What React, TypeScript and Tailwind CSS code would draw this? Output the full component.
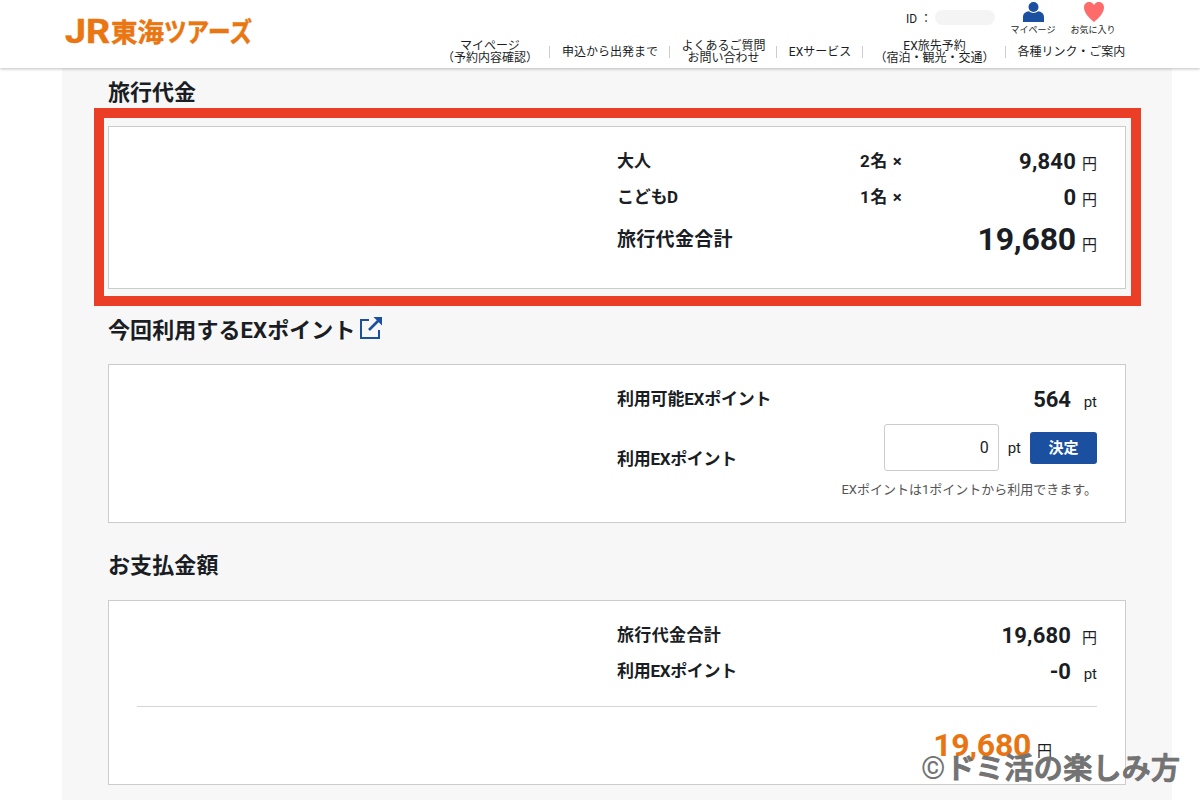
const navItems = [
  { lines: ['マイページ', '（予約内容確認）'], width: 'w-[120px]' },
  { lines: ['申込から出発まで'], width: 'w-[120px]' },
  { lines: ['よくあるご質問', 'お問い合わせ'], width: 'w-[107px]' },
  { lines: ['EXサービス'], width: 'w-[86px]' },
  { lines: ['EX旅先予約', '（宿泊・観光・交通）'], width: 'w-[143px]' },
  { lines: ['各種リンク・ご案内'], width: 'w-[131px]' },
]

function Logo() {
  return (
    <svg width="200" height="44" viewBox="0 0 200 44" className="fill-[#ea7611] stroke-[#ea7611] font-bold" strokeWidth="0.5">
      <text x="1" y="34" fontSize="33" textLength="45" lengthAdjust="spacingAndGlyphs">JR</text>
      <text x="47" y="32.500" fontSize="26" textLength="53" lengthAdjust="spacingAndGlyphs">東海</text>
      <text x="100" y="32.500" fontSize="27" textLength="88" lengthAdjust="spacingAndGlyphs">ツアーズ</text>
    </svg>
  )
}

function Header() {
  return (
    <header className="relative z-10 flex h-[68px] bg-white pl-16 shadow-[0_1px_3px_rgba(0,0,0,0.25)]">
      <div className="w-[366px] pt-[9px]">
        <Logo />
      </div>
      <div className="w-[707px]">
        <div className="flex h-[40px] justify-end pr-[14px]">
          <div className="flex h-[37px] items-center pr-[8px] text-xs">
            <span className="w-[29px] whitespace-nowrap">ID ：</span>
            <span className="mb-[2px] h-[15px] w-[60px] rounded-full bg-[#f4f4f4]" />
          </div>
          <a className="flex w-[60px] flex-col items-center pt-[2px]">
            <svg width="22" height="20" viewBox="0 0 22 20" className="fill-[#1b4f9f]">
              <circle cx="11.500" cy="5" r="5" />
              <path d="M1 20v-4.500C1 11.500 3.500 9.800 7 9.300C9.500 11.400 13.500 11.400 16 9.300C19.500 9.800 22 11.500 22 15.500V20z" />
            </svg>
            <span className="mt-[3px] text-[9px] leading-[10px]">マイページ</span>
          </a>
          <a className="flex w-[60px] flex-col items-center pt-[2px]">
            <svg width="21" height="20" viewBox="-1 0 21 20" className="fill-[#ff6b6b]">
              <path d="M10 3C8.500 0.500 6.500 0 5 0C2 0 0 2.400 0 5.600C0 11 5.500 16.500 10 20C14.500 16.500 20 11 20 5.600C20 2.400 18 0 15 0C13.500 0 11.500 0.500 10 3z" />
            </svg>
            <span className="mt-[3px] text-[9px] leading-[10px]">お気に入り</span>
          </a>
        </div>
        <nav className="flex h-6 items-center">
          {navItems.map((item, i) => (
            <div key={i} className={`relative flex flex-col items-center text-xs leading-3 whitespace-nowrap ${item.width}`}>
              {item.lines.map((line) => (
                <span key={line}>{line}</span>
              ))}
              {i < navItems.length - 1 && (
                <span className="absolute top-1/2 right-0 h-3 w-px -translate-y-1/2 bg-[#ccc]" />
              )}
            </div>
          ))}
        </nav>
      </div>
    </header>
  )
}

function Unit({ children, className = 'w-[26px]' }: { children: string; className?: string }) {
  return <span className={`inline-block text-right text-[15px] font-normal tracking-normal ${className}`}>{children}</span>
}

export default function App() {
  return (
    <div className="relative h-[800px] w-[1200px] overflow-hidden bg-white font-['Roboto','Noto_Sans_CJK_JP',sans-serif] text-[#1a1e24]">
      <Header />

      <main className="ml-[62px] h-[732px] w-[1110px] bg-[#f7f7f7] pr-[46px] pl-[46px]">
        <h2 className="pt-[9px] text-[22px] leading-8 font-bold">旅行代金</h2>

        <section className="relative mt-[17px] h-[163px] border border-[#ccc] bg-white pt-[16px] pr-7 pl-[508px] text-[17px] font-bold">
          <div className="flex h-9 items-center">
            <span className="w-[243px] pt-[2px]">大人</span>
            <span className="pt-[2px] tracking-[0.6px]">2名 ×</span>
            <span className="ml-auto text-[22px] tracking-[0.2px]">9,840<Unit className="w-[21px]">円</Unit></span>
          </div>
          <div className="flex h-9 items-center">
            <span className="w-[243px] pt-[2px] tracking-[-0.3px]">こどもD</span>
            <span className="pt-[2px] tracking-[0.6px]">1名 ×</span>
            <span className="ml-auto text-[22px]">0<Unit className="w-[21px]">円</Unit></span>
          </div>
          <div className="flex h-[46px] items-center">
            <span className="pt-[4px] text-[19px] tracking-[0.3px]">旅行代金合計</span>
            <span className="ml-auto pt-px text-[32px] tracking-[-0.2px]">19,680<Unit className="w-[21px]">円</Unit></span>
          </div>
          {/* Highlight frame */}
          <div className="absolute -top-[19px] -right-4 -bottom-[18px] -left-[15px] border-[10px] border-[#ea3f26]" />
        </section>

        <h2 className="mt-[25px] flex h-8 items-center pt-[2px] text-[22px] leading-8 font-bold">
          <span className="tracking-[0.1px]">今回利用するEXポイント</span>
          <svg width="24" height="24" viewBox="0 0 24 24" className="-mt-[6px] ml-[3px] fill-none stroke-[#1b4f9f]" strokeWidth="2">
            <path d="M10 4H2V22H20V14" />
            <path d="M10 14L19 5" strokeWidth="2.600" />
            <path d="M14.500 1H23V9.500z" className="fill-[#1b4f9f] stroke-none" />
          </svg>
        </h2>

        <section className="mt-[18px] h-[159px] border border-[#ccc] bg-white pt-[16px] pr-7 pl-[508px] text-[17px] font-bold">
          <div className="flex h-9 items-center">
            <span className="pt-[2px] tracking-[-0.2px]">利用可能EXポイント</span>
            <span className="ml-auto text-[22px]">564<Unit>pt</Unit></span>
          </div>
          <div className="flex h-[60px]">
            <span className="pt-[30px] tracking-[-0.3px]">利用EXポイント</span>
            <div className="mt-[7px] ml-auto flex h-[47px] items-center">
              <input
                defaultValue="0"
                className="h-[47px] w-[115px] rounded-[3px] border border-[#ccc] pr-[9px] text-right text-base font-normal"
              />
              <span className="ml-[9px] pt-px text-[15px] font-normal">pt</span>
              <button className="ml-[9px] h-8 w-[67px] rounded-[3px] bg-[#1b4f9f] pt-px text-[15px] font-bold text-white">決定</button>
            </div>
          </div>
          <p className="mt-[3px] text-right text-[13px] leading-5 font-normal text-[#555]">EXポイントは1ポイントから利用できます。</p>
        </section>

        <h2 className="mt-[27px] text-[22px] leading-8 font-bold tracking-[0.1px]">お支払金額</h2>

        <section className="mt-[18px] h-[185px] border border-[#ccc] bg-white pt-[16px] pr-7 pl-7 text-[17px] font-bold">
          <div className="flex h-9 items-center pl-[480px]">
            <span className="pt-[2px] tracking-[0.35px]">旅行代金合計</span>
            <span className="ml-auto text-[22px] tracking-[0.15px]">19,680<Unit>円</Unit></span>
          </div>
          <div className="flex h-9 items-center pl-[480px]">
            <span className="pt-[2px] tracking-[-0.3px]">利用EXポイント</span>
            <span className="ml-auto text-[22px]">-0<Unit>pt</Unit></span>
          </div>
          <div className="mt-[17px] border-t border-[#d5d5d5] pt-[15px] pr-[45px] text-right text-[32px] leading-[46px] tracking-[-0.3px] text-[#e87511]">
            19,680<Unit className="w-[21px] text-[#1a1e24]">円</Unit>
          </div>
        </section>
      </main>

      {/* Watermark, stroked with round joins for a rounded gothic look */}
      <svg
        width="280"
        height="52"
        viewBox="0 0 280 52"
        className="absolute top-[748px] left-[920px] z-20 fill-[#737373] stroke-[#737373] font-medium"
        strokeLinejoin="round"
      >
        <text x="1" y="31" fontSize="31" className="stroke-none font-['Roboto'] font-normal">©</text>
        <text x="26" y="31" fontSize="29" strokeWidth="1.200" textLength="234">ドミ活の楽しみ方</text>
      </svg>
    </div>
  )
}
